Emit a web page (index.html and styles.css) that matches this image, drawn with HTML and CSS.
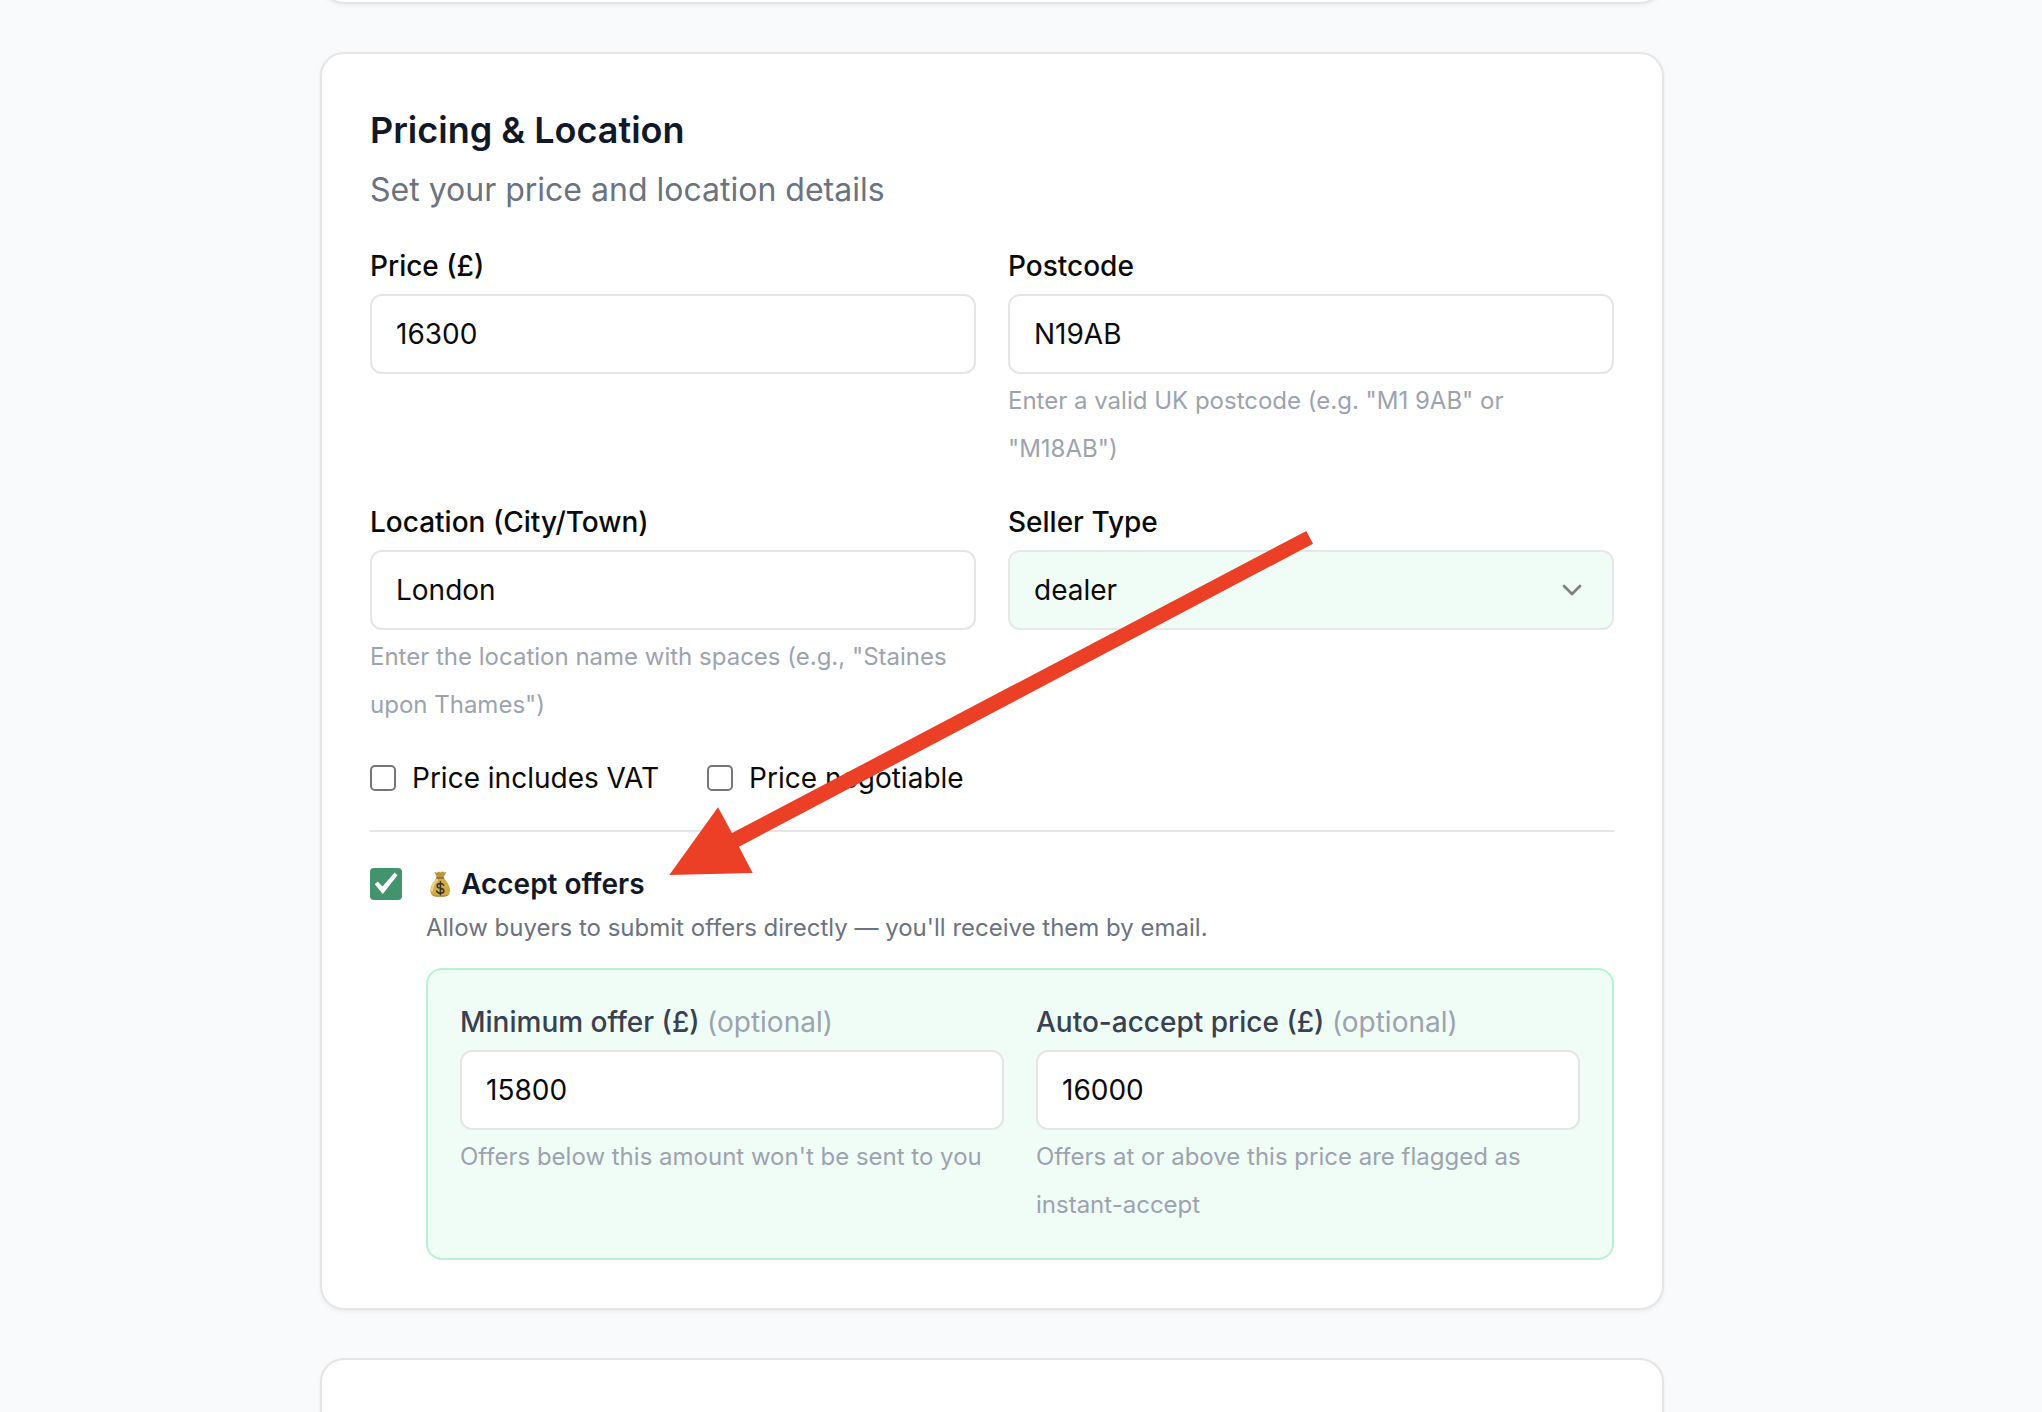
FILE: index.html
```html
<!DOCTYPE html>
<html lang="en">
<head>
<meta charset="utf-8">
<meta name="viewport" content="width=device-width, initial-scale=1">
<title>Pricing &amp; Location</title>
<link rel="stylesheet" href="styles.css">
</head>

<body>
<main class="page">
    <section class="card card-prev"></section>

    <section class="card">
        <h2 class="title">Pricing &amp; Location</h2>
        <p class="subtitle">Set your price and location details</p>

        <form class="form">
            <div class="grid">
                <div class="field">
                    <label for="price">Price (£)</label>
                    <input class="control" type="text" inputmode="numeric" id="price" value="16300">
                </div>
                <div class="field">
                    <label for="postcode">Postcode</label>
                    <input class="control" type="text" id="postcode" value="N19AB">
                    <p class="hint">Enter a valid UK postcode (e.g. "M1 9AB" or "M18AB")</p>
                </div>
                <div class="field">
                    <label for="location">Location (City/Town)</label>
                    <input class="control" type="text" id="location" value="London">
                    <p class="hint">Enter the location name with spaces (e.g., "Staines upon Thames")</p>
                </div>
                <div class="field">
                    <label for="seller">Seller Type</label>
                    <div class="select-wrap">
                        <select class="control filled" id="seller">
                            <option selected>dealer</option>
                            <option>private</option>
                        </select>
                        <svg class="chevron" viewBox="0 0 24 24" fill="none" stroke="currentColor" stroke-width="2" stroke-linecap="round" stroke-linejoin="round"><path d="m6 9 6 6 6-6"/></svg>
                    </div>
                </div>
            </div>

            <div class="checks">
                <label class="check"><input type="checkbox" class="box">Price includes VAT</label>
                <label class="check"><input type="checkbox" class="box">Price negotiable</label>
            </div>

            <div class="offers">
                <input type="checkbox" class="box-green" id="accept" checked>
                <div class="offers-body">
                    <label class="offers-label" for="accept">
                        <svg class="money" viewBox="0 0 28 28">
                            <path d="M8.500 2 11 2.800 12.500 1.500 14.500 2.600 17 1.300 18 2.600 20.500 2 17 8h-6z" fill="#b8963c"/>
                            <path d="M11 8h6.500c3.500 3.300 6.500 8 6.500 12.600 0 4.200-2.500 6-9.800 6s-9.800-1.800-9.800-6C4.400 16 7.500 11.300 11 8z" fill="#d3ab43"/>
                            <path d="M11 10c-3 3-5 6.500-5 10.500" fill="none" stroke="#efd583" stroke-width="2" stroke-linecap="round"/>
                            <path d="M5 23.500c2 2.600 16.400 2.600 18.600 0-1 2.500-3.600 3.300-9.400 3.300S6 26 5 23.500z" fill="#a98a4b"/>
                            <path d="M10.700 8h7" stroke="#8a6a28" stroke-width="1.500" stroke-linecap="round"/>
                            <path d="M17.600 15.300c-.5-1.200-1.700-1.800-3.200-1.800-1.900 0-3.300.9-3.300 2.400 0 3.300 6.800 1.500 6.800 4.900 0 1.500-1.500 2.500-3.500 2.500-1.800 0-3.200-.8-3.700-2.300M14.400 11.800v13" fill="none" stroke="#33322b" stroke-width="1.500" stroke-linecap="round"/>
                        </svg>
                        Accept offers
                    </label>
                    <p class="offers-text">Allow buyers to submit offers directly — you'll receive them by email.</p>

                    <div class="panel grid">
                        <div class="field">
                            <label for="min">Minimum offer (£) <span class="optional">(optional)</span></label>
                            <input class="control" type="text" inputmode="numeric" id="min" value="15800">
                            <p class="hint">Offers below this amount won't be sent to you</p>
                        </div>
                        <div class="field">
                            <label for="auto">Auto-accept price (£) <span class="optional">(optional)</span></label>
                            <input class="control" type="text" inputmode="numeric" id="auto" value="16000">
                            <p class="hint">Offers at or above this price are flagged as instant-accept</p>
                        </div>
                    </div>
                </div>
            </div>
        </form>

        <!-- pointer to the accept offers option -->
        <svg class="arrow" viewBox="0 0 644 344"><path d="M637.300 0 644 12.700 70 315.700 83.700 342 .3 344 49 276.300 63 302z" fill="#eb4026"/></svg>
    </section>

    <section class="card card-next"></section>
</main>
</body>
</html>
```

FILE: styles.css
```css
* {
    box-sizing: border-box;
}
body {
    margin: 0;
    padding-right: 58px;
    background: #f9fafc;
    color: #0a0a0a;
    font-family: Inter, "Liberation Sans", sans-serif;
    font-size: 28px;
    line-height: 40px;
}
h2, p {
    margin: 0;
}
.page {
    display: flex;
    flex-direction: column;
    gap: 48px;
    max-width: 1344px;
    min-height: 100vh;
    margin: 0 auto;
    overflow: clip;
    overflow-clip-margin: 8px;
}
.card {
    position: relative;
    flex: none;
    padding: 48px;
    background: #fff;
    border: 2px solid #e5e5e5;
    border-radius: 24px;
    box-shadow: 0 2px 4px rgba(0,0,0,0.05);
}
/* only the bottom edge shows */
.card-prev {
    margin-top: -96px;
}
/* runs on to the bottom of the window */
.card-next {
    flex: 1;
    padding: 24px 48px;
    border-bottom: 0;
    border-radius: 24px 24px 0 0;
}

.title {
    color: #111827;
    font-size: 36px;
    font-weight: 600;
    line-height: 56px;
}
.subtitle {
    margin-top: 8px;
    color: #6b7280;
    font-size: 32px;
    line-height: 48px;
}
.form {
    margin-top: 32px;
}
.grid {
    display: grid;
    grid-template-columns: 1fr 1fr;
    gap: 29px 32px;
}
.field label {
    display: block;
    margin-bottom: 8px;
    font-weight: 500;
}
.control {
    display: block;
    width: 100%;
    height: 80px;
    padding: 0 24px;
    background: #fff;
    border: 2px solid #e5e5e5;
    border-radius: 12px;
    color: #0a0a0a;
    font: inherit;
    appearance: none;
}
.filled {
    background: #f0fcf6;
    border-color: #e5e7eb;
}
.select-wrap {
    position: relative;
}
.chevron {
    position: absolute;
    right: 26px;
    top: 24px;
    width: 32px;
    height: 32px;
    opacity: 0.5;
    pointer-events: none;
}
.hint {
    margin-top: 3px;
    color: #9ca3af;
    font-size: 24px;
    line-height: 48px;
}

.checks {
    display: flex;
    gap: 48px;
    margin-top: 29px;
    padding-bottom: 32px;
    border-bottom: 2px solid #e5e5e5;
}
.check {
    display: flex;
    align-items: center;
    gap: 16px;
}
.box {
    width: 26px;
    height: 26px;
    margin: 0;
    background: #fff;
    border: 2px solid #767676;
    border-radius: 5px;
    appearance: none;
}
.box-green {
    flex: none;
    width: 32px;
    height: 32px;
    margin: 4px 0 0;
    background: #43946c;
    border-radius: 4px;
    appearance: none;
}
.box-green:checked::before {
    content: "";
    display: block;
    width: 32px;
    height: 32px;
    background: #fff;
    clip-path: polygon(15% 51%, 24% 42%, 39% 58%, 77% 14%, 86% 23%, 40% 81%);
}

.offers {
    display: flex;
    gap: 24px;
    padding-top: 32px;
}
.offers-body {
    flex: 1;
}
.offers-label {
    display: flex;
    align-items: center;
    gap: 7px;
    color: #111827;
    font-weight: 600;
}
.money {
    width: 28px;
    height: 28px;
}
.offers-text {
    color: #6b7280;
    font-size: 24px;
    line-height: 48px;
}
.panel {
    margin-top: 16px;
    padding: 32px 32px 29px;
    background: #f0fcf6;
    border: 2px solid #b9f2d3;
    border-radius: 16px;
}
.panel label {
    color: #374151;
}
.panel .optional {
    color: #9ca3af;
    font-weight: 400;
}

.arrow {
    position: absolute;
    left: 347px;
    top: 477px;
    width: 644px;
    height: 344px;
    pointer-events: none;
}
```
